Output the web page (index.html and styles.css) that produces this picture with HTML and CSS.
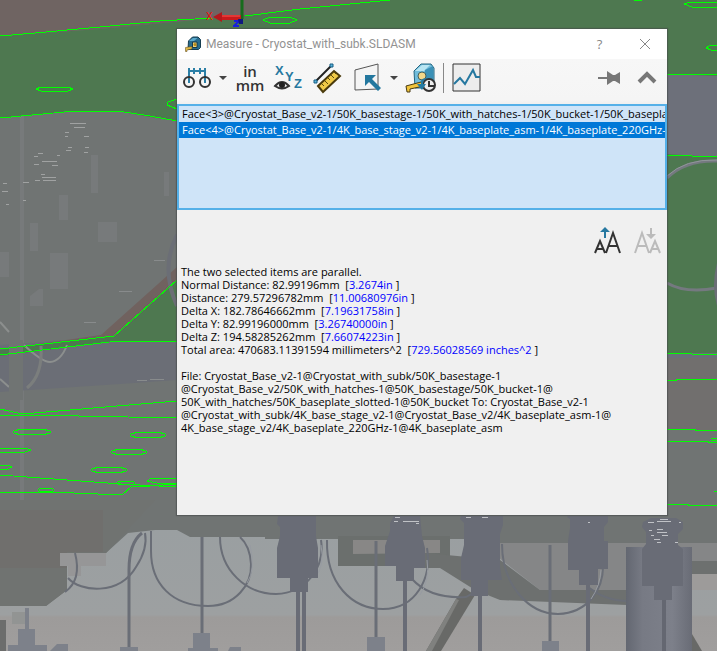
FILE: index.html
```html
<!DOCTYPE html>
<html lang="en">
<head>
<meta charset="utf-8">
<meta name="viewport" content="width=device-width, initial-scale=1">
<title>Measure - Cryostat_with_subk.SLDASM</title>
<link rel="stylesheet" href="styles.css">
</head>
<body>
<main class="workspace">
  <svg class="model" viewBox="0 0 717 651" preserveAspectRatio="xMidYMid slice" aria-hidden="true">
    <defs>
      <linearGradient id="lower" x1="0" y1="0" x2="0" y2="1">
        <stop offset="0" stop-color="#9a9fa1"/><stop offset=".7" stop-color="#9da0a1"/><stop offset=".72" stop-color="#9d9b9a"/><stop offset="1" stop-color="#a09e9d"/>
      </linearGradient>
      <linearGradient id="post" x1="0" x2="1" y1="0" y2="0">
        <stop offset="0" stop-color="#636771"/><stop offset=".25" stop-color="#777a84"/><stop offset=".7" stop-color="#7d808a"/><stop offset="1" stop-color="#696c76"/>
      </linearGradient>
    </defs>
    <rect width="717" height="651" fill="#707473"/>
    <!-- flange -->
    <path d="M0 0H420L205 19L100 29L0 36Z" fill="#6f6462"/>
    <path d="M0 36L100 29L205 19L245 15L380 0H717V360H600L300 120L177 121L150 117L117 111H78L0 118Z" fill="#4e7850"/>
    <!-- wall and inner ring -->
    <g fill="#777a7b">
      <rect x="20" y="116" width="4" height="420"/><rect x="91" y="155" width="7" height="38"/>
      <rect x="59" y="195" width="9" height="25"/><rect x="30" y="223" width="8" height="28"/>
      <rect x="164" y="172" width="5" height="24"/><rect x="50" y="253" width="18" height="36"/>
      <rect x="0" y="252" width="9" height="25"/><rect x="98" y="222" width="19" height="20"/>
      <path d="M30 296l9-7h4v17H30z"/>
    </g>
    <path d="M0 345L100 338L177 270V380L120 384L0 392Z" fill="#6b6e76"/>
    <path d="M0 260H105L0 343Z" fill="#707473" opacity="0"/>
    <path d="M24 346L101 335L177 267V281L115 337L0 352Z" fill="#70625f"/>
    <path d="M177 280L115 336L65 341L0 350V356L115 341H177Z" fill="#4e7850"/>
    <path d="M177 235Q160 268 177 306" fill="none" stroke="#6b6e76" stroke-width="4"/>
    <path d="M24 345Q42 362 50 362Q61 361 67 345M0 322l9 10M0 379l9 8" fill="none" stroke="#8c8f8e" stroke-width="2"/>
    <path d="M41 346Q43 375 27 388" fill="none" stroke="#7b7e7d" stroke-width="3"/>
    <path d="M9 340H23V400H9Z" fill="#707473"/>
    <g stroke="#a0a2a2" fill="none">
      <path d="M70 123.500h16M74 127.500h11M65 132.500h4M65 136.500h3M84 136.500h5M68 147.500h4M85 147.500h4M66 150.500h5M84 152.500h4M38 153.500h5M34 156.500h4M57 155.500h3M42 161.500h15M34 164.500h5M52 165.500h6M41 174.500h4M42 177.500h14M35 180.500h5M43 180.500h13M23 182.500h6M3 183.500h4M2 191.500h6M23 200.500h3M6 204.500h3"/>
      <path d="M154 260.500h11M119 291.500h13M84 322.500h12M137 380.500h10M150 379.500h14" stroke="#888b8c"/>
    </g>
    <!-- right side -->
    <path d="M667 74L717 76V157L667 154Z" fill="#6d707a"/>
    <path d="M667 353H717V430H667Z" fill="#716f6e"/>
    <path d="M667 353h50v5h-50z" fill="#6a6f79"/>
    <path d="M667 178Q685 160 717 161M667 283Q686 294 717 288" fill="none" stroke="#757980" stroke-width="3"/>
    <path d="M667 176Q685 159 717 160" fill="none" stroke="#91969a"/>
    <path d="M717 263Q711 285 717 306Z" fill="#6b6e76"/>
    <!-- lower opening -->
    <path d="M0 606H46L67 590V553H106L128 533L155 530H177L190 537H265V539H480L500 543H640L717 548V651H0Z" fill="url(#lower)"/>
    <path d="M0 500H155L106 553H67V590L46 606H0Z" fill="#707371"/>
    <path d="M0 510H103V552H67V568H0Z" fill="#706f6d"/>
    <path d="M60 553H106V566H81V576H68V566H60Z" fill="#969697"/>
    <path d="M338 536H450V566H338Z" fill="#6b6f6d"/>
    <path d="M353 540H440V553L353 554Z" fill="#888786"/>
    <path d="M480 543H717V590H540Z" fill="#858687"/>
    <path d="M425 553L500 560L540 590H627V605L500 600L475 590L440 568H425Z" fill="#6d706f"/>
    <path d="M692 548H717V563H692Z" fill="#858687"/><path d="M692 561H717V574H692Z" fill="#6d706f"/>
    <path d="M692 574H717V590H692Z" fill="#9d9b9a"/>
    <path d="M456 599L464 588L475 595L441 651H426Z" fill="#686967"/>
    <path d="M456 599L459 600L432 651H426Z" fill="#80817f"/>
    <path d="M692 634L702 651H692Z" fill="#686967"/>
    <path d="M0 620h6v31H0z" fill="#6c6d6c"/><path d="M12 612h15v12H12z" fill="#929493"/>
    <!-- cables -->
    <g fill="none" stroke="#6a6e77" stroke-width="3">
      <path d="M129 651V570Q129 543 142 533"/>
      <path d="M68 578C80 592 119 596 136 567Q148 549 145 533" stroke-width="2"/>
      <path d="M151 531V551C151 584 172 606 208 606C236 606 252 584 251 564Q250 546 240 537" stroke-width="2"/>
      <path d="M220 537C220 570 246 594 276 594C307 593 325 567 321 540" stroke-width="2"/>
      <path d="M202 537V651M376 541V651M550 545V651"/>
      <path d="M327 540C326 584 352 609 383 609C416 609 432 578 427 548" stroke-width="2"/>
      <path d="M412 579Q430 599 466 597L475 592" stroke-width="2"/>
      <path d="M502 544C502 584 528 614 558 614C588 613 604 589 603 564" stroke-width="2"/>
      <path d="M587 586Q603 600 626 601" stroke-width="2"/>
      <path d="M75 553Q82 580 65 592" stroke-width="2"/>
    </g>
    <g fill="none" stroke="#979ba1">
      <path d="M250 545Q256 570 247 583M321 545Q325 565 315 578M427 560Q430 580 420 595M601 570Q600 586 591 599"/>
    </g>
    <path d="M298 590V651M304 590V651M405 578V651M480 594V651M588 582V651" stroke="#696c76" stroke-width="4"/>
    <!-- cylinder and connectors -->
    <path d="M626 547H692V651H626Z" fill="url(#post)"/>
    <path d="M662 595h4v56h-4z" fill="#646771"/>
    <g fill="#696c76">
      <path d="M278 516h38v20l2 12v30h-10v14h-18v-14h-13v-30l3-12v-9l-3-3z"/>
      <path d="M394 516h26l2 20 3 12v20h-11v13h-18v-15h-11v-20l5-15v-8z"/>
      <path d="M461 516h42v9l-3 9v32l2 14h-14v16h-17v-16h-10v-22l3-13v-22l-4-4z"/>
      <path d="M568 516h40v6l-4 5v14h4v28h-10v16h-19v-15h-11v-29l2-13v-9l-3-2z"/>
      <path d="M643 522l8-4h25l7 4v7l-5 5v11l5 4v37h-11v14h-18v-14h-12v-37l4-5v-12l-4-5z"/>
    </g>
    <g fill="#7d818a">
      <path d="M25 608h4v21h6v16h12v6H8v-6h10v-16h7z"/><path d="M50 651l7-7h11v7z"/>
      <path d="M193 633h17v15h8v3h-30v-3h5z"/><path d="M228 651l2-4h11v4zM120 647h18v4h-18z"/>
      <path d="M367 637h18v14h-18zM542 641h17v10h-17z"/>
    </g>
    <path d="M403 521.500h16M395 517.500h5M394 521.500h4M416 523.500h3M466 517.500h5M482 517.500h6M588 522.500h2M648 522.500h6M660 519.500h8M657 521.500h14M679 522.500h2M657 529.500h6M649 530.500h3M657 532.500h10M651 535.500h3M662 535.500h6M654 539.500h6M657 542.500h4M675 542.500h3" stroke="#c0c2c6" fill="none"/>
    <!-- selected edges -->
    <g class="model-edge" shape-rendering="crispEdges">
      <path d="M0 36L35 33L100 27L160 21L212 18M245 16L300 9L390 0M0 118L75 111H118L150 116L177 121"/>
      <path d="M36 89l5-2h27l5 2-5 2H41zM177 99l-9 3-1 3 10 4M263 20l7-3h20l7 3-7 3h-20z"/>
      <path d="M0 349L114 336L177 280M0 355L118 341H177M0 409L22 414L177 401M0 415H30L177 418"/>
      <ellipse cx="32" cy="432" rx="19" ry="3"/><ellipse cx="148" cy="435" rx="18" ry="3"/><ellipse cx="129" cy="452" rx="18" ry="3"/><ellipse cx="109" cy="470" rx="18" ry="3"/><ellipse cx="46" cy="490" rx="8" ry="2"/><ellipse cx="126" cy="483" rx="9" ry="2"/>
      <path d="M0 448H25l6 2-6 2H0M0 465h8l4 2-4 2H0M0 475L121 484L177 487M0 492H50L122 495L132 486H150L177 484M177 478H152l-5 3 10 2 20 1"/>
      <path d="M642 0h-8M684 4l6-2h27M684 4l8 3h25M706 48l5-3h6M706 48l5 2h6M667 74h33l17 1M667 155l50 2M667 353l50 2M667 380h9v-1h41M667 429h28v1h22M667 441h41v1h9M711 438h6M711 440h6M714 491h3M667 504h21v1h29"/>
    </g>
    <!-- origin triad -->
    <path d="M242 0V19" stroke="#176c1d" stroke-width="3"/>
    <path d="M219 15h22v5h-22z" fill="#c81a1d"/><path d="M213 17l9-5v10z" fill="#b5181c"/><path d="M222 16h18" stroke="#ff5550"/>
    <path d="M234 21h5M239 21l-5 5M233 26h6" stroke="#1820dc" stroke-width="2"/><path d="M238 19h5v5h-4z" fill="#111a80"/>
    <text class="axis" x="206" y="20">X</text>
  </svg>

  <section class="dialog" role="dialog" aria-labelledby="dialog-title">
    <header class="titlebar">
      <svg class="app-icon" width="16" height="16" viewBox="0 0 32 32" aria-hidden="true">
        <path d="M7 10L15 2h11l5 5v16l-4 4H6z" fill="#286b8d" stroke="#173e50" stroke-width="2"/>
        <path d="M8 10l8-6h9l-7 6z" fill="#5aa9cc"/><path d="M15 12h9v11h-9z" fill="#f2d47b" stroke="#183b4b" stroke-width="2"/><circle cx="20" cy="17" r="3" fill="#b8891b"/>
        <path d="M1 23l13-2v5L4 28v3H1z" fill="#dfb846" stroke="#544014"/>
      </svg>
      <h1 class="title" id="dialog-title">Measure - Cryostat_with_subk.SLDASM</h1>
      <button class="title-button" type="button" aria-label="Help">?</button>
      <button class="title-button close" type="button" aria-label="Close"><svg width="12" height="12" viewBox="0 0 12 12"><path d="M1 1l10 10M11 1L1 11" fill="none" stroke="#878787"/></svg></button>
    </header>

    <div class="toolbar" role="toolbar" aria-label="Measure tools">
      <button class="tool" type="button" aria-label="Arc and circle measurements">
        <svg width="30" height="30" viewBox="0 0 30 30"><g fill="none" stroke="#2b7fa6" stroke-width="2"><path d="M7 5v14M23 5v14M7 8h16M12 5v6M18 5v6"/></g><g fill="none" stroke="#333" stroke-width="2"><circle cx="7" cy="19" r="5"/><circle cx="23" cy="19" r="5"/></g><path d="M7 16v4M23 16v4" stroke="#2b7fa6" stroke-width="2"/></svg>
      </button>
      <button class="drop" type="button" aria-label="Arc and circle options"></button>
      <button class="tool units" type="button" aria-label="Units and precision"><span>in</span><span>mm</span></button>
      <button class="tool" type="button" aria-label="Show XYZ measurements">
        <svg width="30" height="30" viewBox="0 0 30 30"><g class="xyz"><text x="1" y="12">X</text><text x="11" y="18">Y</text><text x="20" y="25">Z</text></g><path d="M1 23Q8 15 15 23Q8 28 1 23Z" fill="#eee" stroke="#333" stroke-width="2"/><circle cx="8" cy="22" r="3" fill="#222"/></svg>
      </button>
      <button class="tool ruler" type="button" aria-label="Point to point">
        <svg width="30" height="30" viewBox="0 0 30 30"><path d="M4 18L19 3" stroke="#222" stroke-width="2"/><path d="M6 23L22 8l6 5L11 29z" fill="#f0ca47" stroke="#4b3b0c" stroke-width="2"/><path d="M10 21l2 2M13 18l3 3M16 15l2 2M19 12l3 3M22 9l2 2" stroke="#5e4b0d"/><path d="M2 17h3v3H2zM18 1h3v3h-3z" fill="#5eb5dc" stroke="#155d83"/></svg>
      </button>
      <button class="tool" type="button" aria-label="Projected on">
        <svg width="30" height="30" viewBox="0 0 30 30"><path d="M2 7L25 1v25L2 27z" fill="#f4f4f4" stroke="#555"/><path d="M12 12h11l-4 4 9 9-3 3-9-9-4 4z" fill="#23779e"/></svg>
      </button>
      <button class="drop" type="button" aria-label="Projection options"></button>
      <button class="tool history" type="button" aria-label="Measurement history">
        <svg width="32" height="30" viewBox="0 0 32 30"><path d="M9 8L16 1h10l3 4v16l-3 4H10z" fill="#70bcdb" stroke="#246681"/><path d="M10 8l7-6h8l-6 6z" fill="#b8e5f2"/><path d="M20 7l8-4v15h-8z" fill="#3b91b7"/><circle cx="17" cy="13" r="4" fill="#f3d789" stroke="#43605e"/><path d="M1 23l15-4 3 4-14 3v3H2z" fill="#f0c43c" stroke="#493b14"/><circle cx="24" cy="22" r="6" fill="#eee" stroke="#333" stroke-width="2"/><path d="M24 18v5h5" fill="none" stroke="#333" stroke-width="2"/><path d="M20 15Q15 16 16 21h-4l5 6 4-6h-3q0-4 3-5z" fill="#267ba2"/></svg>
      </button>
      <button class="tool sensor" type="button" aria-label="Create sensor">
        <svg width="30" height="30" viewBox="0 0 30 30"><path d="M1 1h27v27H1z" fill="#ededed" stroke="#333"/><path d="M2 21l6-6 5 6 8-14 3 7h4" fill="none" stroke="#2678a0" stroke-width="2"/></svg>
      </button>
      <span class="spacer"></span>
      <button class="tool pin" type="button" aria-label="Keep visible"><svg width="24" height="16" viewBox="0 0 24 16"><path d="M1 7h9V1l6 4h2l5-3v12l-5-3h-2l-6 4V9H1z" fill="#777"/></svg></button>
      <button class="tool collapse" type="button" aria-label="Collapse"><svg width="20" height="14" viewBox="0 0 20 14"><path d="M2 11l8-8 8 8" fill="none" stroke="#777" stroke-width="4"/></svg></button>
    </div>

    <select class="selection" size="6" multiple aria-label="Selected items">
      <option>Face&lt;3&gt;@Cryostat_Base_v2-1/50K_basestage-1/50K_with_hatches-1/50K_bucket-1/50K_baseplate_slotted-1</option>
      <option selected>Face&lt;4&gt;@Cryostat_Base_v2-1/4K_base_stage_v2-1/4K_baseplate_asm-1/4K_baseplate_220GHz-1</option>
    </select>

    <div class="text-size">
      <button class="tool" type="button" aria-label="Increase text size"><svg width="28" height="28" viewBox="0 0 28 28"><g class="letter-a"><path d="M1 26L6 14l5 12M3 22h7M12 26L19 6l7 20M15 19h9"/></g><path d="M10 11V5H6l5-5 5 5h-4v6z" fill="#2678a0"/></svg></button>
      <button class="tool" type="button" aria-label="Decrease text size" disabled><svg width="28" height="28" viewBox="0 0 28 28"><g class="letter-a"><path d="M1 26L8 6l7 20M3 19h10M16 26l5-12 5 12M18 22h7"/></g><path d="M16 1h2v6h4l-5 5-5-5h4z" fill="#bbb"/></svg></button>
    </div>

    <div class="results">
      <p>The two selected items are parallel.</p>
      <p>Normal Distance: 82.99196mm&nbsp; [<b>3.2674in</b> ]</p>
      <p>Distance: 279.57296782mm&nbsp; [<b>11.00680976in</b> ]</p>
      <p>Delta X: 182.78646662mm&nbsp; [<b>7.19631758in</b> ]</p>
      <p>Delta Y: 82.99196000mm&nbsp; [<b>3.26740000in</b> ]</p>
      <p>Delta Z: 194.58285262mm&nbsp; [<b>7.66074223in</b> ]</p>
      <p>Total area: 470683.11391594 millimeters^2&nbsp; [<b>729.56028569 inches^2</b> ]</p>
      <p class="file">File: Cryostat_Base_v2-1@Cryostat_with_subk/50K_basestage-1<br>@Cryostat_Base_v2/50K_with_hatches-1@50K_basestage/50K_bucket-1@<br>50K_with_hatches/50K_baseplate_slotted-1@50K_bucket To: Cryostat_Base_v2-1<br>@Cryostat_with_subk/4K_base_stage_v2-1@Cryostat_Base_v2/4K_baseplate_asm-1@<br>4K_base_stage_v2/4K_baseplate_220GHz-1@4K_baseplate_asm</p>
    </div>
  </section>
</main>
</body>
</html>
```
FILE: styles.css
```css
* { box-sizing: border-box; }

body {
  margin: 0;
  font: 11px/13px "Open Sans", "Noto Sans", sans-serif;
  color: #000;
}

.workspace {
  position: relative;
  min-height: 100vh;
  padding: 29px 50px 136px 177px;
  overflow: hidden;
  background: #707473;
}

.model {
  position: absolute;
  inset: 0;
  width: 100%;
  height: 100%;
}

.model-edge { fill: none; stroke: #00ff00; }
.axis { font: 10px "Liberation Sans", sans-serif; fill: #f00; }

.dialog {
  position: relative;
  background: #f0f0f0;
  box-shadow: 0 0 1px 1px rgba(70, 75, 75, .6);
}

button {
  margin: 0;
  padding: 0;
  border: 0;
  background: none;
  font: inherit;
  color: inherit;
}

.titlebar {
  display: flex;
  align-items: center;
  height: 30px;
  padding-left: 8px;
  background: #fff;
}

.title {
  flex: 1;
  margin: 0 0 0 5px;
  font: 12px/16px Roboto, "Open Sans", sans-serif;
  color: #929292;
}

.title-button {
  display: grid;
  place-items: center;
  width: 45px;
  height: 30px;
  font-size: 13px;
  color: #878787;
}

.toolbar {
  display: flex;
  align-items: center;
  height: 45px;
  padding: 0 10px 8px 5px;
  background: linear-gradient(#f7f7f7, #f5f5f5 90%, #efefef);
}

.tool { display: grid; place-items: center; }
.tool svg { display: block; overflow: visible; }

.drop { width: 22px; height: 30px; }
.drop::before {
  content: "";
  display: block;
  width: 0;
  margin: 0 auto;
  border: 4px solid transparent;
  border-top-color: #444;
  border-bottom: 0;
}

.units {
  width: 32px;
  margin-right: 8px;
  font: 600 15px/14px "Open Sans", sans-serif;
  color: #333;
}
.xyz { font: bold 13px "Liberation Sans", sans-serif; fill: #2678a0; }
.ruler { margin: 0 11px 0 8px; }
.history { margin-right: 6px; }
.sensor { padding-left: 8px; border-left: 1px solid #888; }
.spacer { flex: 1; }
.pin { margin-right: 16px; }

.selection {
  display: block;
  width: 100%;
  height: 106px;
  padding: 0;
  border: 2px solid #55b0e8;
  border-radius: 0;
  outline: 0;
  background: #cfe4f8;
  font: inherit;
  overflow: hidden;
  scrollbar-width: none;
}
.selection option {
  min-height: 16px;
  padding: 0 3px;
  line-height: 16px;
  color: #000;
}
.selection option:checked {
  background: #0078d7 linear-gradient(#0078d7, #0078d7);
  color: #fff;
}

.text-size {
  display: flex;
  justify-content: flex-end;
  gap: 12px;
  padding: 17px 5px 10px;
}
.letter-a { fill: none; stroke: #333; stroke-width: 2; }
button:disabled .letter-a { stroke: #bbb; }

.results { padding: 0 4px 81px; }
.results p { margin: 0; }
.results b { font-weight: normal; color: #00f; }
.results .file { margin-top: 13px; }
```
